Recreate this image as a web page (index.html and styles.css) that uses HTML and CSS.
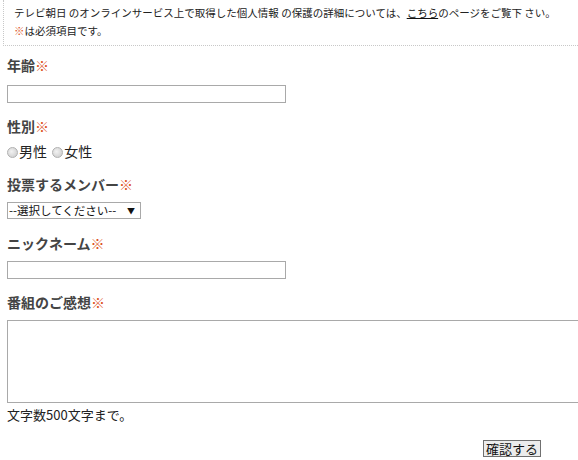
FILE: index.html
```html
<!DOCTYPE html>
<html lang="ja">

<head>
    <meta charset="UTF-8">
    <meta name="viewport" content="width=device-width, initial-scale=1.0">
    <title>ご感想フォーム</title>
    <link rel="stylesheet" href="styles.css">
</head>

<body>
    <!-- 注意書き -->
    <div class="notice">
        <p>テレビ朝日 のオンラインサービス上で取得した個人情報 の保護の詳細については、<a href="#">こちら</a>のページをご覧下 さい。</p>
        <p><span class="req">※</span>は必須項目です。</p>
    </div>

    <form class="vote-form">
        <div class="field">
            <div class="label">年齢<span class="req">※</span></div>
            <input type="text" class="text-input">
        </div>

        <div class="field gender">
            <div class="label">性別<span class="req">※</span></div>
            <div class="radios">
                <label><input type="radio" name="sex">男性</label>
                <label><input type="radio" name="sex">女性</label>
            </div>
        </div>

        <div class="field member">
            <div class="label">投票するメンバー<span class="req">※</span></div>
            <div class="select-wrap">
                <select class="member-select">
                    <option>--選択してください--</option>
                </select>
            </div>
        </div>

        <div class="field">
            <div class="label">ニックネーム<span class="req">※</span></div>
            <input type="text" class="text-input">
        </div>

        <div class="field last">
            <div class="label">番組のご感想<span class="req">※</span></div>
            <textarea class="comment"></textarea>
            <div class="note">文字数500文字まで。</div>
        </div>

        <div class="submit">
            <button type="button" class="confirm-button">確認する</button>
        </div>
    </form>
</body>

</html>
```

FILE: styles.css
```css
/* 全体 */
html {
    overflow: hidden;
}

body {
    margin: 0;
    padding: 0;
    font-family: "Noto Sans CJK JP", "Noto Sans", sans-serif;
    color: #222;
    background: #fff;
}

/* 注意書き */
.notice {
    margin-left: 3px;
    padding: 4px 10px 5px;
    border-left: 1px dotted #c8c8c8;
    border-bottom: 1px dotted #c8c8c8;
    font-size: 10.5px;
    line-height: 18px;
}

.notice p {
    margin: 0;
}

.notice a {
    color: #111;
    text-decoration: underline;
}

.req {
    color: #dc5022;
}

/* フォーム */
.vote-form {
    padding: 9px 0 0 7px;
}

.field {
    margin-bottom: 13px;
}

.field.member {
    margin-bottom: 14px;
}

.field.last {
    margin-bottom: 0;
}

.label {
    font-size: 14px;
    font-weight: bold;
    color: #444;
    line-height: 20px;
    margin-bottom: 8px;
}

.field:first-child .label {
    margin-bottom: 10px;
}

.text-input {
    display: block;
    box-sizing: border-box;
    width: 279px;
    height: 18px;
    margin: 0;
    padding: 0 2px;
    border: 1px solid #a9a9a9;
    font-size: 12px;
}

/* ラジオ */
.radios {
    font-size: 14px;
    line-height: 20px;
    margin-top: -3px;
    color: #222;
}

.radios label {
    margin-right: 2px;
}

.radios input {
    -webkit-appearance: none;
    appearance: none;
    width: 11px;
    height: 11px;
    margin: 0 1px 0 0;
    border: 1px solid #b0b0b0;
    border-radius: 50%;
    background: radial-gradient(circle at 40% 40%, #f2f2f2 0, #d4d4d4 70%);
    vertical-align: -1px;
}

/* セレクト */
.select-wrap {
    position: relative;
    width: 134px;
    height: 17px;
}

.member-select {
    -webkit-appearance: none;
    appearance: none;
    display: block;
    box-sizing: border-box;
    width: 134px;
    height: 17px;
    margin: 0;
    padding: 0 0 0 1px;
    border: 1px solid #a9a9a9;
    border-radius: 0;
    background: #fff;
    font-family: inherit;
    font-size: 11.5px;
    line-height: 15px;
    color: #111;
}

.select-wrap::after {
    content: '▼';
    position: absolute;
    right: 6px;
    top: 2px;
    font-size: 8px;
    line-height: 13px;
    color: #111;
    pointer-events: none;
}

/* 感想 */
.comment {
    display: block;
    box-sizing: border-box;
    width: 600px;
    height: 83px;
    margin: 0;
    border: 1px solid #a9a9a9;
    resize: none;
}

.note {
    font-size: 13px;
    line-height: 18px;
    margin-top: 3px;
}

/* ボタン */
.submit {
    text-align: right;
    padding-right: 37px;
    margin-top: 16px;
    line-height: 17px;
}

.confirm-button {
    height: 17px;
    margin: 0;
    padding: 0 2px;
    border: 1px solid #707070;
    border-radius: 0;
    background: #ececec;
    font-family: inherit;
    font-size: 13px;
    line-height: 15px;
    color: #111;
    vertical-align: top;
}
```
